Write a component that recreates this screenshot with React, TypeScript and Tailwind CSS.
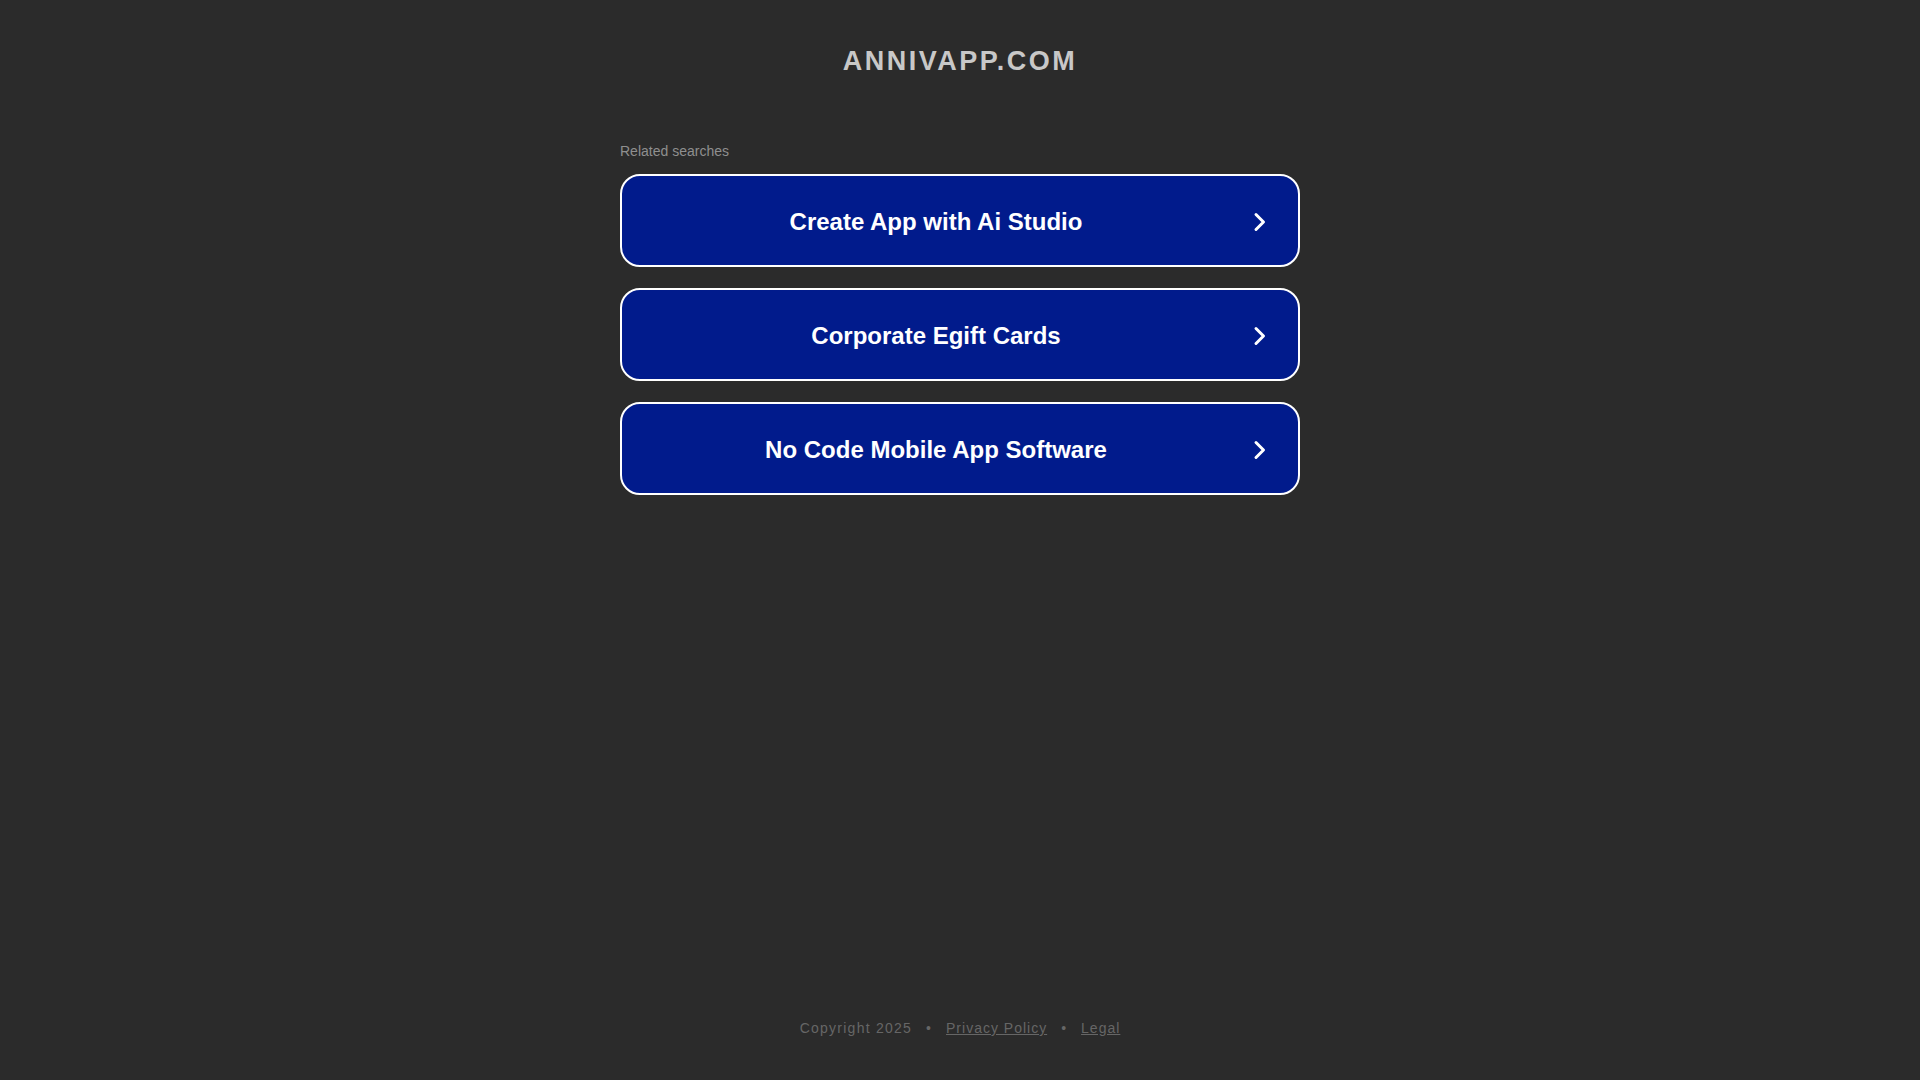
import React from 'react'

const searches = ['Create App with Ai Studio', 'Corporate Egift Cards', 'No Code Mobile App Software']

function Chevron() {
  return (
    <svg width="20" height="24" viewBox="0 0 20 24" fill="none" className="shrink-0">
      <path d="M6 4.5 L13.5 12 L6 19.5" stroke="#ffffff" strokeWidth="3" strokeLinecap="round" strokeLinejoin="round" />
    </svg>
  )
}

export default function App() {
  return (
    <div className="flex h-[1080px] w-full flex-col bg-[#2b2b2b] font-['Liberation_Sans',Arial,sans-serif]">
      <main className="flex flex-1 flex-col items-center">
        <h1 className="pt-[46px] text-[27px] font-bold leading-[31px] tracking-[2.5px] text-[#c8c8c8]">
          ANNIVAPP.COM
        </h1>

        <div className="mt-[66px] w-[680px]">
          <div className="text-[14px] leading-[16px] text-[#8f8f8f]">Related searches</div>

          <div className="mt-[15px] flex flex-col gap-[21px]">
            {searches.map((s) => (
              <a
                key={s}
                href="#"
                className="flex h-[93px] items-center rounded-[20px] border-2 border-white bg-[#011b8c] pt-[2px] pr-[28px]"
              >
                <span className="flex-1 text-center text-[24px] font-bold leading-[28px] text-white">{s}</span>
                <Chevron />
              </a>
            ))}
          </div>
        </div>
      </main>

      {/* footer */}
      <footer className="flex justify-center pb-[44px] text-[14px] leading-[16px] tracking-[1px] text-[#666666]">
        <span className="tracking-[1.25px]">Copyright 2025</span>
        <span className="mx-[14px]">•</span>
        <a href="#" className="underline">Privacy Policy</a>
        <span className="mx-[14px]">•</span>
        <a href="#" className="underline">Legal</a>
      </footer>
    </div>
  )
}
